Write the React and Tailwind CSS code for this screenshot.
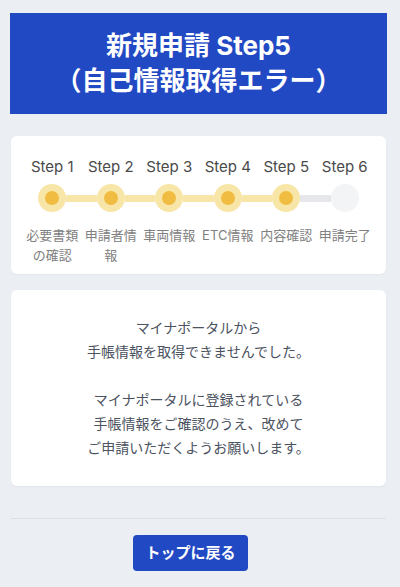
const steps = [
  { n: 'Step 1', label: '必要書類の確認', done: true },
  { n: 'Step 2', label: '申請者情報', done: true },
  { n: 'Step 3', label: '車両情報', done: true },
  { n: 'Step 4', label: 'ETC情報', done: true },
  { n: 'Step 5', label: '内容確認', done: true },
  { n: 'Step 6', label: '申請完了', done: false },
]

const font = { fontFamily: 'Inter, "Noto Sans CJK JP", sans-serif' }

function StepItem({ s, i }) {
  const last = i === steps.length - 1
  // segment colours: line is yellow up to the last finished step
  const leftOn = i > 0 && s.done
  const rightOn = !last && steps[i + 1].done
  return (
    <div className="flex flex-col items-center">
      <div className="h-6 leading-6 text-[15px] text-[#4a4a4a] whitespace-nowrap">{s.n}</div>
      <div className="mt-[5px] flex items-center w-full">
        <div
          className={
            'flex-1 h-[7px] ' +
            (i === 0 ? 'bg-transparent' : leftOn ? 'bg-[#f8e6a8]' : 'bg-[#e5e7eb]')
          }
        />
        {s.done ? (
          <div className="w-7 h-7 rounded-full bg-[#f8e6a8] flex items-center justify-center">
            <div className="w-[14px] h-[14px] rounded-full bg-[#f0bd42]" />
          </div>
        ) : (
          <div className="w-7 h-7 rounded-full bg-[#f3f4f6]" />
        )}
        <div
          className={
            'flex-1 h-[7px] ' +
            (last ? 'bg-transparent' : rightOn ? 'bg-[#f8e6a8]' : 'bg-[#e5e7eb]')
          }
        />
      </div>
      <div className="mt-[13px] text-[13px] leading-5 text-[#808080] text-center px-px">
        {s.label}
      </div>
    </div>
  )
}

export default function App() {
  return (
    <div className="min-h-screen bg-[#ebeef3] pl-[10px] pr-[13px] pt-[13px] pb-6" style={font}>
      <div className="bg-[#2249c4] text-white font-bold text-[26px] leading-[35px] text-center pt-[15px] pb-[16px]">
        <div>新規申請 Step5</div>
        <div>（自己情報取得エラー）</div>
      </div>

      <div className="mx-px mt-[22px] bg-white rounded-md pt-[19px] pb-[9px] px-3 shadow-[0_1px_2px_rgba(0,0,0,0.04)]">
        <div className="grid grid-cols-6">
          {steps.map((s, i) => (
            <StepItem key={s.n} s={s} i={i} />
          ))}
        </div>
      </div>

      <div className="mx-px mt-4 bg-white rounded-md py-[26px] px-4 text-center text-[14px] leading-6 text-[#4b5260] shadow-[0_1px_2px_rgba(0,0,0,0.04)]">
        <p>
          マイナポータルから
          <br />
          手帳情報を取得できませんでした。
        </p>
        <br />
        <p>
          マイナポータルに登録されている
          <br />
          手帳情報をご確認のうえ、改めて
          <br />
          ご申請いただくようお願いします。
        </p>
      </div>

      <div className="mx-px mt-8 border-t border-[#dce0e6]" />

      <div className="flex justify-center mt-4 pr-4">
        <button className="bg-[#2249c4] text-white font-bold text-[15px] leading-9 px-3 rounded">
          トップに戻る
        </button>
      </div>
    </div>
  )
}
